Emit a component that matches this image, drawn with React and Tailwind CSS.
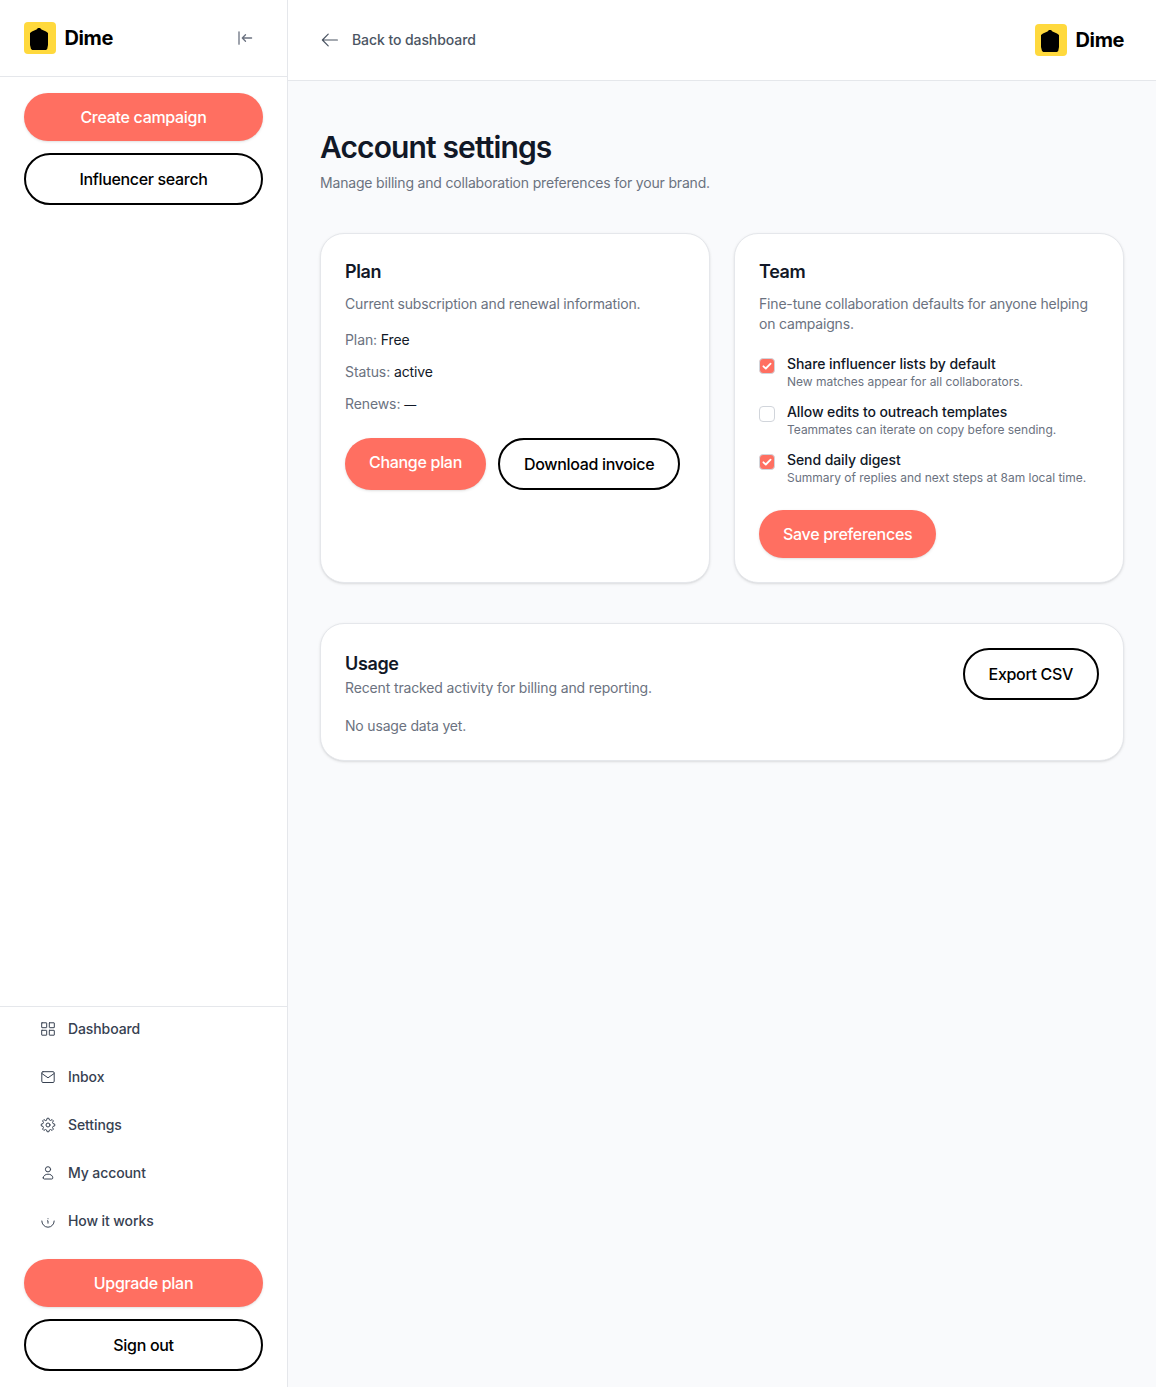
const ink = "text-[#111827]";

function gearPath() {
  const teeth = 8;
  const step = (Math.PI * 2) / teeth;
  const profile = [[-0.34, 5.2], [-0.17, 6.8], [0.17, 6.8], [0.34, 5.2]];
  const points = [];
  for (let i = 0; i < teeth; i++) {
    profile.forEach(([offset, r]) => points.push([(i + offset) * step - Math.PI / 2, r]));
  }
  return (
    points
      .map(([a, r], i) => `${i ? "L" : "M"}${(8 + Math.cos(a) * r).toFixed(2)} ${(8 + Math.sin(a) * r).toFixed(2)}`)
      .join(" ") + " Z"
  );
}

function NavIcon({ name }) {
  const common = {
    width: 16,
    height: 16,
    viewBox: "0 0 16 16",
    fill: "none",
    stroke: "currentColor",
    strokeLinecap: "round",
    strokeLinejoin: "round",
    className: "shrink-0",
  };
  if (name === "dashboard")
    return (
      <svg {...common}>
        <rect x="1.7" y="1.8" width="5" height="4.9" rx="0.3" />
        <rect x="9.3" y="1.8" width="5" height="4.9" rx="0.3" />
        <rect x="1.7" y="9.3" width="5" height="4.9" rx="0.3" />
        <rect x="9.3" y="9.3" width="5" height="4.9" rx="0.3" />
      </svg>
    );
  if (name === "inbox")
    return (
      <svg {...common}>
        <rect x="1.8" y="2.7" width="12.4" height="10.8" rx="1.2" />
        <path d="M2 4.6 L8 8.8 L14 4.6" />
      </svg>
    );
  if (name === "settings")
    return (
      <svg {...common}>
        <circle cx="8" cy="8" r="2" />
        <path d={gearPath()} />
      </svg>
    );
  if (name === "account")
    return (
      <svg {...common}>
        <circle cx="8" cy="4.3" r="2.6" />
        <path d="M3.2 12.8 C3.4 7.9 12.6 7.9 12.8 12.8 Q12.8 14 11.8 14 H4.2 Q3.2 14 3.2 12.8 Z" />
      </svg>
    );
  return (
    <svg {...common}>
      <path d="M1.8 8 A6.2 6.2 0 0 0 14.2 8" />
      <path d="M7.5 7.8 H8 V10.2" />
      <path d="M8 5.7 V5.8" />
    </svg>
  );
}

function Brand() {
  return (
    <div className="flex items-center gap-[8.5px]">
      <svg width="32" height="32" viewBox="0 0 32 32">
        <rect width="32" height="32" rx="4" fill="#ffd93d" />
        <path d="M14 6 H16 L17.5 7.4 L22 9.4 L24 11 V23 L23.2 27 L22 28 H8.3 L7 27 L6 23 V11 L8 9.4 L12.5 7.4 Z" fill="#000" />
      </svg>
      <span className="text-[20px] leading-7 font-bold tracking-[-0.4px] text-black">Dime</span>
    </div>
  );
}

function Primary({ children, className = "" }) {
  return (
    <button className={"flex items-start justify-center rounded-[26px] bg-[#ff6f61] px-6 py-3 text-base font-medium tracking-[-0.3px] whitespace-nowrap text-white shadow-sm " + className}>
      {children}
    </button>
  );
}

function Outline({ children, className = "" }) {
  return (
    <button className={"flex items-center justify-center rounded-full border-2 border-black bg-white px-6 py-3 text-base font-medium tracking-[-0.33px] whitespace-nowrap text-black " + className}>
      {children}
    </button>
  );
}

function Preference({ checked, title, note }) {
  return (
    <label className="flex items-start gap-3">
      <span className={"mt-1 flex size-4 shrink-0 items-center justify-center rounded border border-[#d1d5db] " + (checked ? "bg-[#ff6f61]" : "bg-white")}>
        {checked && (
          <svg width="14" height="14" viewBox="0 0 14 14" fill="none" stroke="white" strokeWidth="1.8" strokeLinecap="round" strokeLinejoin="round">
            <path d="M3.4 7.3 L5.8 9.5 L10.6 4.6" />
          </svg>
        )}
      </span>
      <span>
        <span className={"block text-sm font-medium tracking-[-0.08px] " + ink}>{title}</span>
        <span className="block text-xs tracking-[-0.02px] text-[#6b7280]">{note}</span>
      </span>
    </label>
  );
}

function Title({ children }) {
  return <h2 className={"text-lg leading-7 font-semibold tracking-[-0.35px] " + ink}>{children}</h2>;
}

const nav = [
  ["dashboard", "Dashboard"],
  ["inbox", "Inbox"],
  ["settings", "Settings"],
  ["account", "My account"],
  ["help", "How it works"],
];

const card = "rounded-3xl border border-[#e5e7eb] bg-white p-6 shadow-sm";
const body = "text-sm tracking-[-0.18px]";

export default function App() {
  return (
    <div className="flex h-[1387px] w-[1156px] bg-[#f9fafc] font-['Inter',sans-serif] text-[#6b7280]">
      <aside className="flex w-72 shrink-0 flex-col border-r border-[#e5e7eb] bg-white">
        <div className="flex h-[77px] items-center justify-between border-b border-[#e5e7eb] px-6">
          <Brand />
          <svg className="mr-2" width="20" height="20" viewBox="0 0 20 20" fill="none" stroke="#6b7280" strokeWidth="1.3" strokeLinecap="round" strokeLinejoin="round">
            <path d="M4 3.8 V16.2 M16.6 10 H7.5 M10.5 6.8 L7.3 10 L10.5 13.2" />
          </svg>
        </div>
        <div className="flex flex-1 flex-col gap-3 px-6 pt-4">
          <Primary>Create campaign</Primary>
          <Outline>Influencer search</Outline>
        </div>
        <div className="border-t border-[#e5e7eb] px-6 pb-4">
          <nav className="flex flex-col gap-1">
            {nav.map(([icon, label]) => (
              <a key={icon} className="flex h-11 items-center gap-3 px-4 text-sm font-medium tracking-[-0.1px] text-[#374151]">
                <NavIcon name={icon} />
                <span>{label}</span>
              </a>
            ))}
          </nav>
          <div className="mt-4 flex flex-col gap-3">
            <Primary>Upgrade plan</Primary>
            <Outline>Sign out</Outline>
          </div>
        </div>
      </aside>

      <div className="flex flex-1 flex-col">
        <header className="flex h-[81px] items-center justify-between border-b border-[#e5e7eb] bg-white px-8">
          <a className="flex items-center gap-3 text-sm font-medium tracking-[-0.08px] text-[#4b5563]">
            <svg width="20" height="20" viewBox="0 0 20 20" fill="none" stroke="currentColor" strokeWidth="1.2" strokeLinecap="round" strokeLinejoin="round">
              <path d="M17.4 10 H2.4 M8.2 4.2 L2.4 10 L8.2 15.8" />
            </svg>
            <span>Back to dashboard</span>
          </a>
          <Brand />
        </header>
        <main className="px-8 pt-12">
          <h1 className={"text-3xl leading-9 font-semibold tracking-[-0.87px] " + ink}>Account settings</h1>
          <p className={body + " mt-2"}>Manage billing and collaboration preferences for your brand.</p>

          <div className="mt-10 grid grid-cols-2 gap-6">
            <section className={card}>
              <Title>Plan</Title>
              <p className={body + " mt-2"}>Current subscription and renewal information.</p>
              <div className="mt-4 flex flex-col gap-3 text-sm tracking-[-0.1px]">
                <p>Plan: <span className={ink}>Free</span></p>
                <p>Status: <span className={ink}>active</span></p>
                <p>Renews: <span className={"text-xs " + ink}>—</span></p>
              </div>
              <div className="mt-6 flex gap-3">
                <Primary>Change plan</Primary>
                <Outline>Download invoice</Outline>
              </div>
            </section>
            <section className={card}>
              <Title>Team</Title>
              <p className={body + " mt-2"}>Fine-tune collaboration defaults for anyone helping on campaigns.</p>
              <div className="mt-5 flex flex-col gap-3">
                <Preference checked title="Share influencer lists by default" note="New matches appear for all collaborators." />
                <Preference title="Allow edits to outreach templates" note="Teammates can iterate on copy before sending." />
                <Preference checked title="Send daily digest" note="Summary of replies and next steps at 8am local time." />
              </div>
              <Primary className="mt-6">Save preferences</Primary>
            </section>
          </div>

          <section className={card + " mt-10"}>
            <div className="flex items-center justify-between">
              <div>
                <Title>Usage</Title>
                <p className="text-sm tracking-[-0.14px]">Recent tracked activity for billing and reporting.</p>
              </div>
              <Outline>Export CSV</Outline>
            </div>
            <p className={body + " mt-4"}>No usage data yet.</p>
          </section>
        </main>
      </div>
    </div>
  );
}
